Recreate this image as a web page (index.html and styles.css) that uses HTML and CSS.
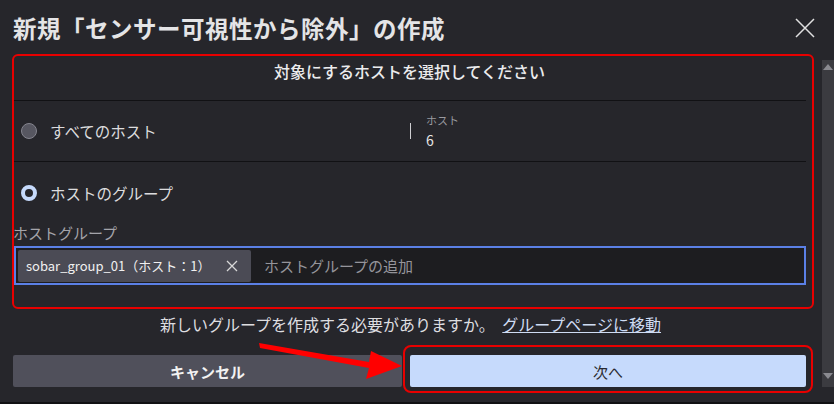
FILE: index.html
```html
<!DOCTYPE html>
<html lang="ja">
<head>
    <meta charset="UTF-8">
    <meta name="viewport" content="width=device-width, initial-scale=1.0">
    <title>新規「センサー可視性から除外」の作成</title>
    <link rel="stylesheet" href="styles.css">
</head>
<body>
    <div class="page">
        <div class="dialog">
            <div class="dialog-head">
                <p class="title">新規「センサー可視性から除外」の作成</p>
                <button class="close">
                    <svg width="20" height="20" viewBox="0 0 20 20"><path d="M1 1 L19 19 M19 1 L1 19" stroke="#e0e0e0" stroke-width="1.5" fill="none"/></svg>
                </button>
            </div>

            <div class="section">
                <p class="section-title">対象にするホストを選択してください</p>
                <div class="row">
                    <div class="option">
                        <span class="radio"></span>
                        すべてのホスト
                    </div>
                    <div class="stat">
                        <span class="stat-bar"></span>
                        <div class="stat-text">
                            <span class="stat-label">ホスト</span>
                            <span class="stat-value">6</span>
                        </div>
                    </div>
                </div>
                <div class="option option-group">
                    <span class="radio radio-on"></span>
                    ホストのグループ
                </div>
                <p class="field-label">ホストグループ</p>
                <div class="tag-input">
                    <span class="chip">sobar_group_01（ホスト：1）
                        <svg width="12" height="12" viewBox="0 0 12 12"><path d="M1 1 L11 11 M11 1 L1 11" stroke="#d8d8d8" stroke-width="1.3" fill="none"/></svg>
                    </span>
                    <span class="placeholder">ホストグループの追加</span>
                </div>
            </div>

            <p class="hint">新しいグループを作成する必要がありますか。 <a href="#">グループページに移動</a></p>

            <div class="actions">
                <button class="cancel">キャンセル</button>
                <button class="next">次へ</button>
            </div>
        </div>

        <div class="scrollbar">
            <span class="arrow-up"></span>
            <span class="arrow-down"></span>
        </div>
    </div>

    <!-- annotations drawn over the screenshot -->
    <div class="mark mark-section"></div>
    <div class="mark mark-next"></div>
    <svg class="pointer" width="834" height="404" viewBox="0 0 834 404">
        <polygon points="259,343 260,348 369,368 366,379 402,366 371,351 369,362" fill="#f00"/>
    </svg>
</body>
</html>
```

FILE: styles.css
```css
body {
    margin: 0;
    background-color: #26262b;
    color: #e2e2e4;
    font-family: "Noto Sans CJK JP", "Noto Sans", sans-serif;
    width: 834px;
    height: 404px;
    overflow: hidden;
    position: relative;
}
p {
    margin: 0;
}
.page {
    display: flex;
    height: 402px;
    border-bottom: 2px solid #111113;
}
.dialog {
    width: 793px;
    padding-left: 13px;
    padding-right: 16px;
}
.dialog-head {
    display: flex;
    align-items: center;
    justify-content: space-between;
    height: 54px;
}
.title {
    font-size: 23.5px;
    font-weight: bold;
    color: #e4e4e6;
    margin-top: 2px;
    letter-spacing: 0.5px;
}
.close {
    background: transparent;
    border: none;
    padding: 0;
    margin-right: -9px;
    margin-top: 2px;
    height: 20px;
    cursor: pointer;
}
.section-title {
    text-align: center;
    font-size: 16px;
    font-weight: 500;
    height: 41px;
    padding-top: 5px;
    line-height: 24px;
    color: #ececee;
    border-bottom: 1px solid #111114;
}
.row {
    display: flex;
    height: 60px;
    align-items: center;
    border-bottom: 1px solid #111114;
}
.option {
    display: flex;
    align-items: center;
    gap: 13px;
    width: 389px;
    padding-left: 8px;
    font-size: 15.5px;
    color: #dcdcde;
}
.option-group {
    height: 62px;
}
.radio {
    width: 14px;
    height: 14px;
    border-radius: 50%;
    background-color: #575761;
    border: 1px solid #85858f;
}
.radio-on {
    width: 8px;
    height: 8px;
    background-color: #26262b;
    border: 4px solid #c6dafc;
}
.stat {
    display: flex;
    align-items: center;
    gap: 15px;
}
.stat-bar {
    width: 1px;
    height: 16px;
    background-color: #cfcfd2;
}
.stat-text {
    display: flex;
    flex-direction: column;
    white-space: nowrap;
}
.stat-label {
    font-size: 11px;
    line-height: 16px;
    color: #9a9aa0;
}
.stat-value {
    font-size: 14px;
    line-height: 20px;
    margin-top: 2px;
    color: #e6e6e6;
}
.field-label {
    font-size: 15px;
    color: #a4a4aa;
    line-height: 18px;
}
.tag-input {
    display: flex;
    align-items: center;
    gap: 13px;
    height: 35px;
    margin-top: 4px;
    margin-left: 1px;
    padding: 0 2px;
    border: 2px solid #5b80e6;
    background-color: #1d1d20;
}
.chip {
    display: flex;
    align-items: center;
    height: 32px;
    width: 225px;
    padding-left: 8px;
    gap: 16px;
    background-color: #4b4b55;
    border-radius: 2px;
    font-size: 13px;
    color: #f0f0f0;
    white-space: nowrap;
}
.placeholder {
    font-size: 15px;
    color: #95959b;
}
.hint {
    text-align: center;
    font-size: 16px;
    margin-top: 27px;
    color: #dedee0;
    padding-left: 2px;
}
.hint a {
    color: #cfdcf3;
    margin-left: 4px;
}
.actions {
    display: flex;
    gap: 8px;
    margin-top: 19px;
}
.actions button {
    height: 32px;
    border: none;
    border-radius: 2px;
    font-family: inherit;
    font-size: 15px;
    cursor: pointer;
}
.cancel {
    width: 389px;
    background-color: #50505b;
    color: #f2f2f2;
    font-weight: bold;
}
.next {
    flex: 1;
    background-color: #c6dafc;
    color: #2a2a30;
}
.scrollbar {
    width: 12px;
    margin-top: 60px;
    height: 327px;
    background-color: #3b3b40;
    display: flex;
    flex-direction: column;
    justify-content: space-between;
    align-items: center;
    padding: 4px 0;
    box-sizing: border-box;
}
.arrow-up {
    border-left: 5px solid transparent;
    border-right: 5px solid transparent;
    border-bottom: 6px solid #8a8a90;
}
.arrow-down {
    border-left: 5px solid transparent;
    border-right: 5px solid transparent;
    border-top: 6px solid #8a8a90;
    margin-bottom: 4px;
}
.mark {
    position: absolute;
    border: 2px solid #e80000;
    border-radius: 6px;
}
.mark-section {
    left: 12px;
    top: 54px;
    width: 798px;
    height: 251px;
}
.mark-next {
    left: 403px;
    top: 345px;
    width: 406px;
    height: 44px;
    border-radius: 8px;
}
.pointer {
    position: absolute;
    left: 0;
    top: 0;
}
```
